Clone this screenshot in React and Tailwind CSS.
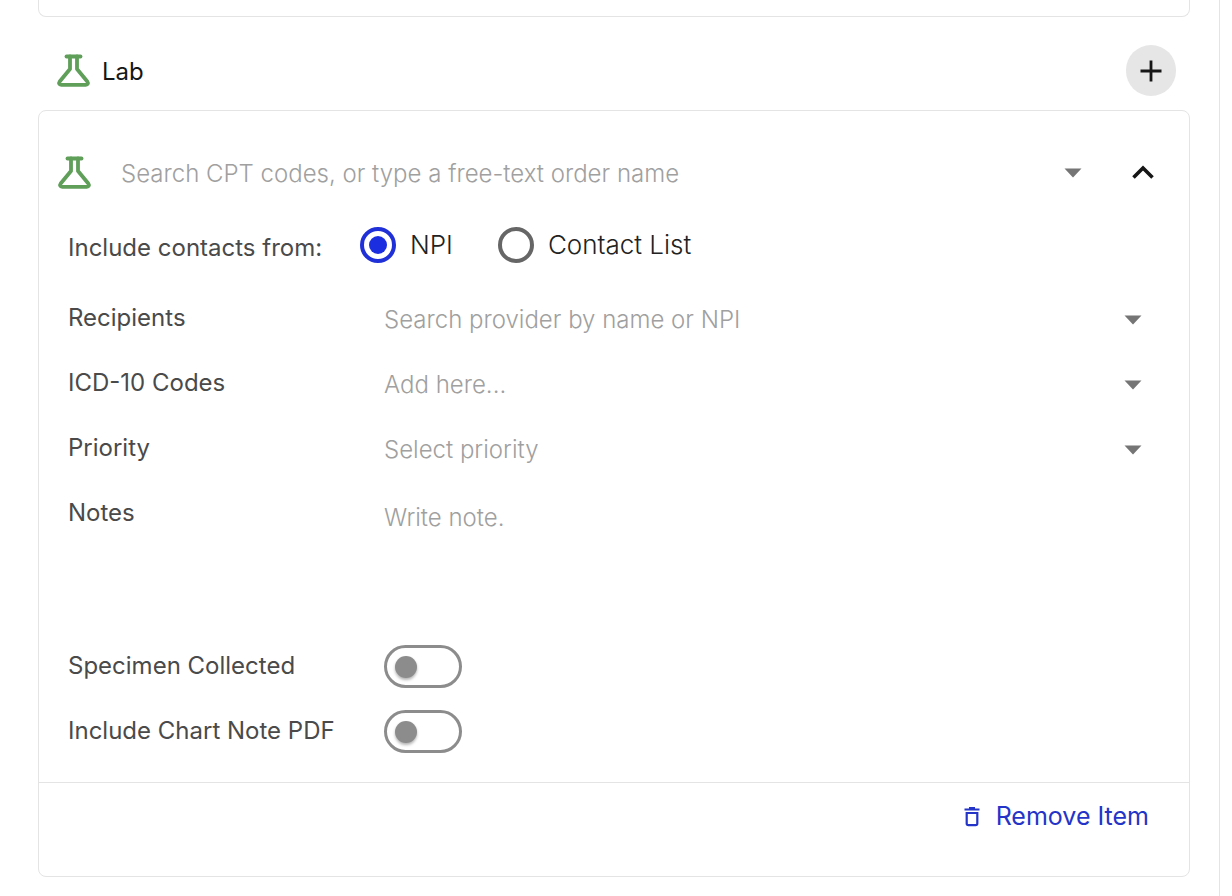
import React, { useState } from 'react';

const FlaskIcon = () => (
  <svg className="w-9 h-9 shrink-0" viewBox="0 0 36 36" fill="none" stroke="#5f9f59" strokeWidth="3.8" strokeLinecap="round" strokeLinejoin="round" aria-hidden="true">
    <path d="M10.5 3.5h14" />
    <path d="M14 3.5v12.500L3.700 28.500c-1.200 1.700-.5 3.300 1.500 3.300h24.600c2 0 2.700-1.600 1.500-3.300L21 16V3.500" />
  </svg>
);

const CaretIcon = () => (
  <svg className="w-[18px] h-[10px] shrink-0 pointer-events-none" viewBox="0 0 18 10" fill="#757575" aria-hidden="true">
    <path d="M0.5 0.5h17L9 9.500z" />
  </svg>
);

const fieldClass =
  "flex-1 min-w-0 bg-transparent outline-none appearance-none font-light text-[#222222] placeholder:text-[#a0a0a0] placeholder:opacity-100";

const FieldRow = ({ id, label, children }) => (
  <div className="flex items-center h-[65px] pl-[29px] pr-[47px]">
    <label htmlFor={id} className="w-[316px] shrink-0 pb-[2px]">{label}</label>
    <div className="flex flex-1 min-w-0 items-center pt-[2px]">
      {children}
      <CaretIcon />
    </div>
  </div>
);

const RadioOption = ({ value, selected, onSelect }) => (
  <label className="flex items-center gap-[14px] text-[26px] text-[#222222] font-light">
    <input
      type="radio"
      name="contact-source"
      value={value}
      checked={selected === value}
      onChange={() => onSelect(value)}
      className="appearance-none w-9 h-9 shrink-0 rounded-full border-4 border-[#666666] p-[5px] bg-clip-content checked:border-[#2030d8] checked:bg-[#1c2fe0]"
    />
    <span>{value}</span>
  </label>
);

const ToggleRow = ({ id, label }) => {
  const [checked, setChecked] = useState(false);

  return (
    <div className="flex items-center h-[65px] pl-[29px]">
      <label htmlFor={id} className="w-[316px] shrink-0 pb-[2px]">{label}</label>
      <input
        id={id}
        type="checkbox"
        role="switch"
        checked={checked}
        onChange={(e) => setChecked(e.target.checked)}
        className="appearance-none flex items-center w-[78px] h-[43px] shrink-0 rounded-full border-3 border-[#8c8c8c] px-2 before:block before:w-[22px] before:h-[22px] before:rounded-full before:bg-[#8c8c8c] before:shadow-[0_2px_3px_rgba(0,0,0,0.3)] checked:justify-end checked:border-[#2030d8] checked:before:bg-[#2030d8]"
      />
    </div>
  );
};

const App = () => {
  const [source, setSource] = useState('NPI');
  const [isOpen, setIsOpen] = useState(true);

  return (
    <div className="min-h-screen bg-white pr-3 text-2xl text-[#4a4a4a] font-['Inter',sans-serif]">
      <main className="min-h-screen border-r border-[#e4e4e4] pl-[38px] pr-[29px]">
        <div className="h-[17px] rounded-b-lg border border-t-0 border-[#e4e4e4]" />

        <header className="flex items-center justify-between pt-7 pb-[14px] pl-[18px] pr-[14px]">
          <div className="flex items-center gap-[10px]">
            <FlaskIcon />
            <h2 className="pt-[2px] text-[#161616]">Lab</h2>
          </div>
          <button type="button" aria-label="Add lab order" className="flex items-center justify-center w-[50px] h-[51px] rounded-full bg-[#e6e6e6]">
            <svg className="w-6 h-6" viewBox="0 0 24 24" stroke="#161616" strokeWidth="2.8" aria-hidden="true">
              <path d="M12 1.500v21M1.500 12h21" />
            </svg>
          </button>
        </header>

        <section className="rounded-lg border border-[#e4e4e4]">
          <div className="flex items-center h-[72px] mt-[26px] pl-[18px] pr-[34px]">
            <FlaskIcon />
            <input
              type="text"
              aria-label="Lab order"
              placeholder="Search CPT codes, or type a free-text order name"
              className={`${fieldClass} ml-7 pt-[2px]`}
            />
            <CaretIcon />
            <button type="button" aria-label="Collapse" onClick={() => setIsOpen(!isOpen)} className="ml-[49px] pb-[2px]">
              <svg className={`w-6 h-[14px] ${isOpen ? '' : 'rotate-180'}`} viewBox="0 0 24 14" fill="none" stroke="#161616" strokeWidth="3.6" aria-hidden="true">
                <path d="M2.500 12.500L12 3l9.500 9.500" />
              </svg>
            </button>
          </div>

          {isOpen && (
            <div className="pb-[18px]">
              <fieldset className="flex items-center h-[72px] mb-[5px] pl-[29px]" aria-labelledby="contact-source-label">
                <span id="contact-source-label" className="w-[292px] shrink-0 pt-[6px]">Include contacts from:</span>
                <div className="flex items-center gap-[45px]">
                  <RadioOption value="NPI" selected={source} onSelect={setSource} />
                  <RadioOption value="Contact List" selected={source} onSelect={setSource} />
                </div>
              </fieldset>

              <FieldRow id="recipients" label="Recipients">
                <input id="recipients" type="text" placeholder="Search provider by name or NPI" className={fieldClass} />
              </FieldRow>
              <FieldRow id="icd-codes" label="ICD-10 Codes">
                <input id="icd-codes" type="text" placeholder="Add here..." className={fieldClass} />
              </FieldRow>
              <FieldRow id="priority" label="Priority">
                <select id="priority" defaultValue="" className={`${fieldClass} invalid:text-[#a0a0a0]`} required>
                  <option value="" disabled>Select priority</option>
                  <option value="routine">Routine</option>
                  <option value="urgent">Urgent</option>
                </select>
              </FieldRow>

              <div className="flex h-[153px] pt-4 pl-[29px] pr-12">
                <label htmlFor="notes" className="w-[316px] shrink-0">Notes</label>
                <textarea id="notes" placeholder="Write note." className={`${fieldClass} resize-none pt-[5px] h-[110px]`} />
              </div>

              <ToggleRow id="specimen" label="Specimen Collected" />
              <ToggleRow id="chart-note" label="Include Chart Note PDF" />
            </div>
          )}

          <footer className="flex justify-end h-[94px] border-t border-[#e4e4e4] pt-[17px] pr-10">
            <button type="button" className="flex items-center self-start gap-4 text-[25px] text-[#2434c8]">
              <svg className="w-4 h-5" viewBox="0 0 16 20" fill="none" stroke="#2434c8" strokeWidth="2.2" aria-hidden="true">
                <path d="M0.5 2.500h15M5 1.200h6M2.500 6h11M2.700 5v11.500q0 1.700 1.700 1.700h7.200q1.700 0 1.700-1.700V5" />
              </svg>
              Remove Item
            </button>
          </footer>
        </section>
      </main>
    </div>
  );
};

export default App;
